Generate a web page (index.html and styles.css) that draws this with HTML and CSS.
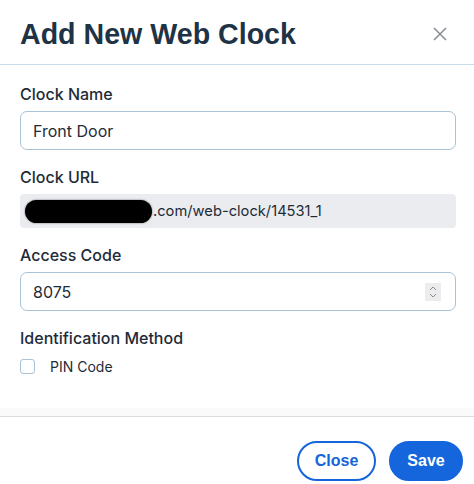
FILE: index.html
```html
<!DOCTYPE html>
<html>
<head>
<meta charset="utf-8">
<link rel="stylesheet" href="styles.css">
</head>
<body>
<div class="modal">
  <header class="modal-header">
    <h1 class="modal-title">Add New Web Clock</h1>
    <button class="close-x" aria-label="Close">
      <svg width="14" height="14" viewBox="0 0 14 14"><path d="M1 1L13 13M13 1L1 13" stroke="#8a8f96" stroke-width="1.6" fill="none"/></svg>
    </button>
  </header>
  <div class="modal-body">
    <div class="field">
      <label class="label">Clock Name</label>
      <div class="input">Front Door</div>
    </div>
    <div class="field">
      <label class="label">Clock URL</label>
      <div class="url-box"><span class="redact"></span><span class="url-text">.com/web-clock/14531_1</span></div>
    </div>
    <div class="field">
      <label class="label">Access Code</label>
      <div class="input input-number"><span>8075</span>
        <span class="spinner">
          <svg width="10" height="14" viewBox="0 0 10 14"><path d="M2 5L5 2L8 5M2 9L5 12L8 9" stroke="#8a8f96" stroke-width="1" fill="none"/></svg>
        </span>
      </div>
    </div>
    <div class="field field-last">
      <label class="label">Identification Method</label>
      <div class="check-row"><span class="checkbox"></span><span class="check-label">PIN Code</span></div>
    </div>
  </div>
  <div class="body-end"></div>
  <footer class="modal-footer">
    <button class="btn btn-outline">Close</button>
    <button class="btn btn-primary">Save</button>
  </footer>
</div>
</body>
</html>
```
FILE: styles.css
```css
html, body {
  margin: 0;
  padding: 0;
  background: #ffffff;
}
body {
  font-family: Inter, "Liberation Sans", sans-serif;
  color: #1e2b38;
}
.modal {
  width: 474px;
  height: 484px;
  display: flex;
  flex-direction: column;
}
.modal-header {
  height: 64px;
  border-bottom: 1px solid #c7dbe9;
  display: flex;
  align-items: center;
  justify-content: space-between;
  padding: 0 20px;
  box-sizing: content-box;
}
.modal-title {
  margin: 0;
  font-family: "Liberation Sans", Arial, sans-serif;
  font-weight: 700;
  font-size: 28.6px;
  color: #1f3346;
  padding-top: 4px;
}
.close-x {
  border: 0;
  background: transparent;
  padding: 0;
  margin-right: 7px;
  margin-top: 4px;
  display: flex;
}
.modal-body {
  padding: 20px 18px 0 20px;
  display: flex;
  flex-direction: column;
}
.field {
  display: flex;
  flex-direction: column;
  margin-bottom: 18px;
}
.field-last {
  margin-bottom: 0;
}
.label {
  font-size: 16px;
  font-weight: 500;
  line-height: 18px;
  color: #1e2b38;
  margin-bottom: 8px;
}
.input {
  height: 39px;
  box-sizing: border-box;
  border: 1px solid #a8c2d6;
  border-radius: 7px;
  padding: 0 12px;
  display: flex;
  align-items: center;
  font-size: 16px;
  color: #1e2b38;
}
.input-number {
  justify-content: space-between;
  padding-right: 14px;
}
.spinner {
  width: 16px;
  height: 18px;
  background: #ececef;
  display: flex;
  align-items: center;
  justify-content: center;
}
.url-box {
  height: 34px;
  background: #ebecf0;
  border-radius: 4px;
  display: flex;
  align-items: center;
  padding-left: 5px;
  font-size: 14.7px;
  color: #1e2b38;
}
.redact {
  width: 127px;
  height: 23px;
  background: #000;
  border-radius: 12px;
  box-shadow: 0 0 2px rgba(0,0,0,0.6);
}
.url-text {
  margin-left: 1px;
}
.check-row {
  display: flex;
  align-items: center;
  margin-top: 3px;
}
.checkbox {
  width: 15px;
  height: 15px;
  box-sizing: border-box;
  border: 1px solid #a8c2d6;
  border-radius: 3px;
}
.check-label {
  font-size: 14px;
  margin-left: 15px;
  color: #1e2b38;
}
.body-end {
  margin-top: 33px;
  height: 8px;
  background: #fafafa;
  border-bottom: 1px solid #dcdcdc;
}
.modal-footer {
  display: flex;
  justify-content: flex-end;
  gap: 13px;
  padding: 24px 11px 0 0;
}
.btn {
  height: 40px;
  border-radius: 20px;
  font-family: "Liberation Sans", Arial, sans-serif;
  font-weight: 700;
  font-size: 16px;
  cursor: pointer;
  box-sizing: border-box;
}
.btn-outline {
  width: 79px;
  background: #fff;
  border: 2px solid #1565dc;
  color: #1565dc;
}
.btn-primary {
  width: 74px;
  background: #1565dc;
  border: 2px solid #1565dc;
  color: #fff;
}
```
